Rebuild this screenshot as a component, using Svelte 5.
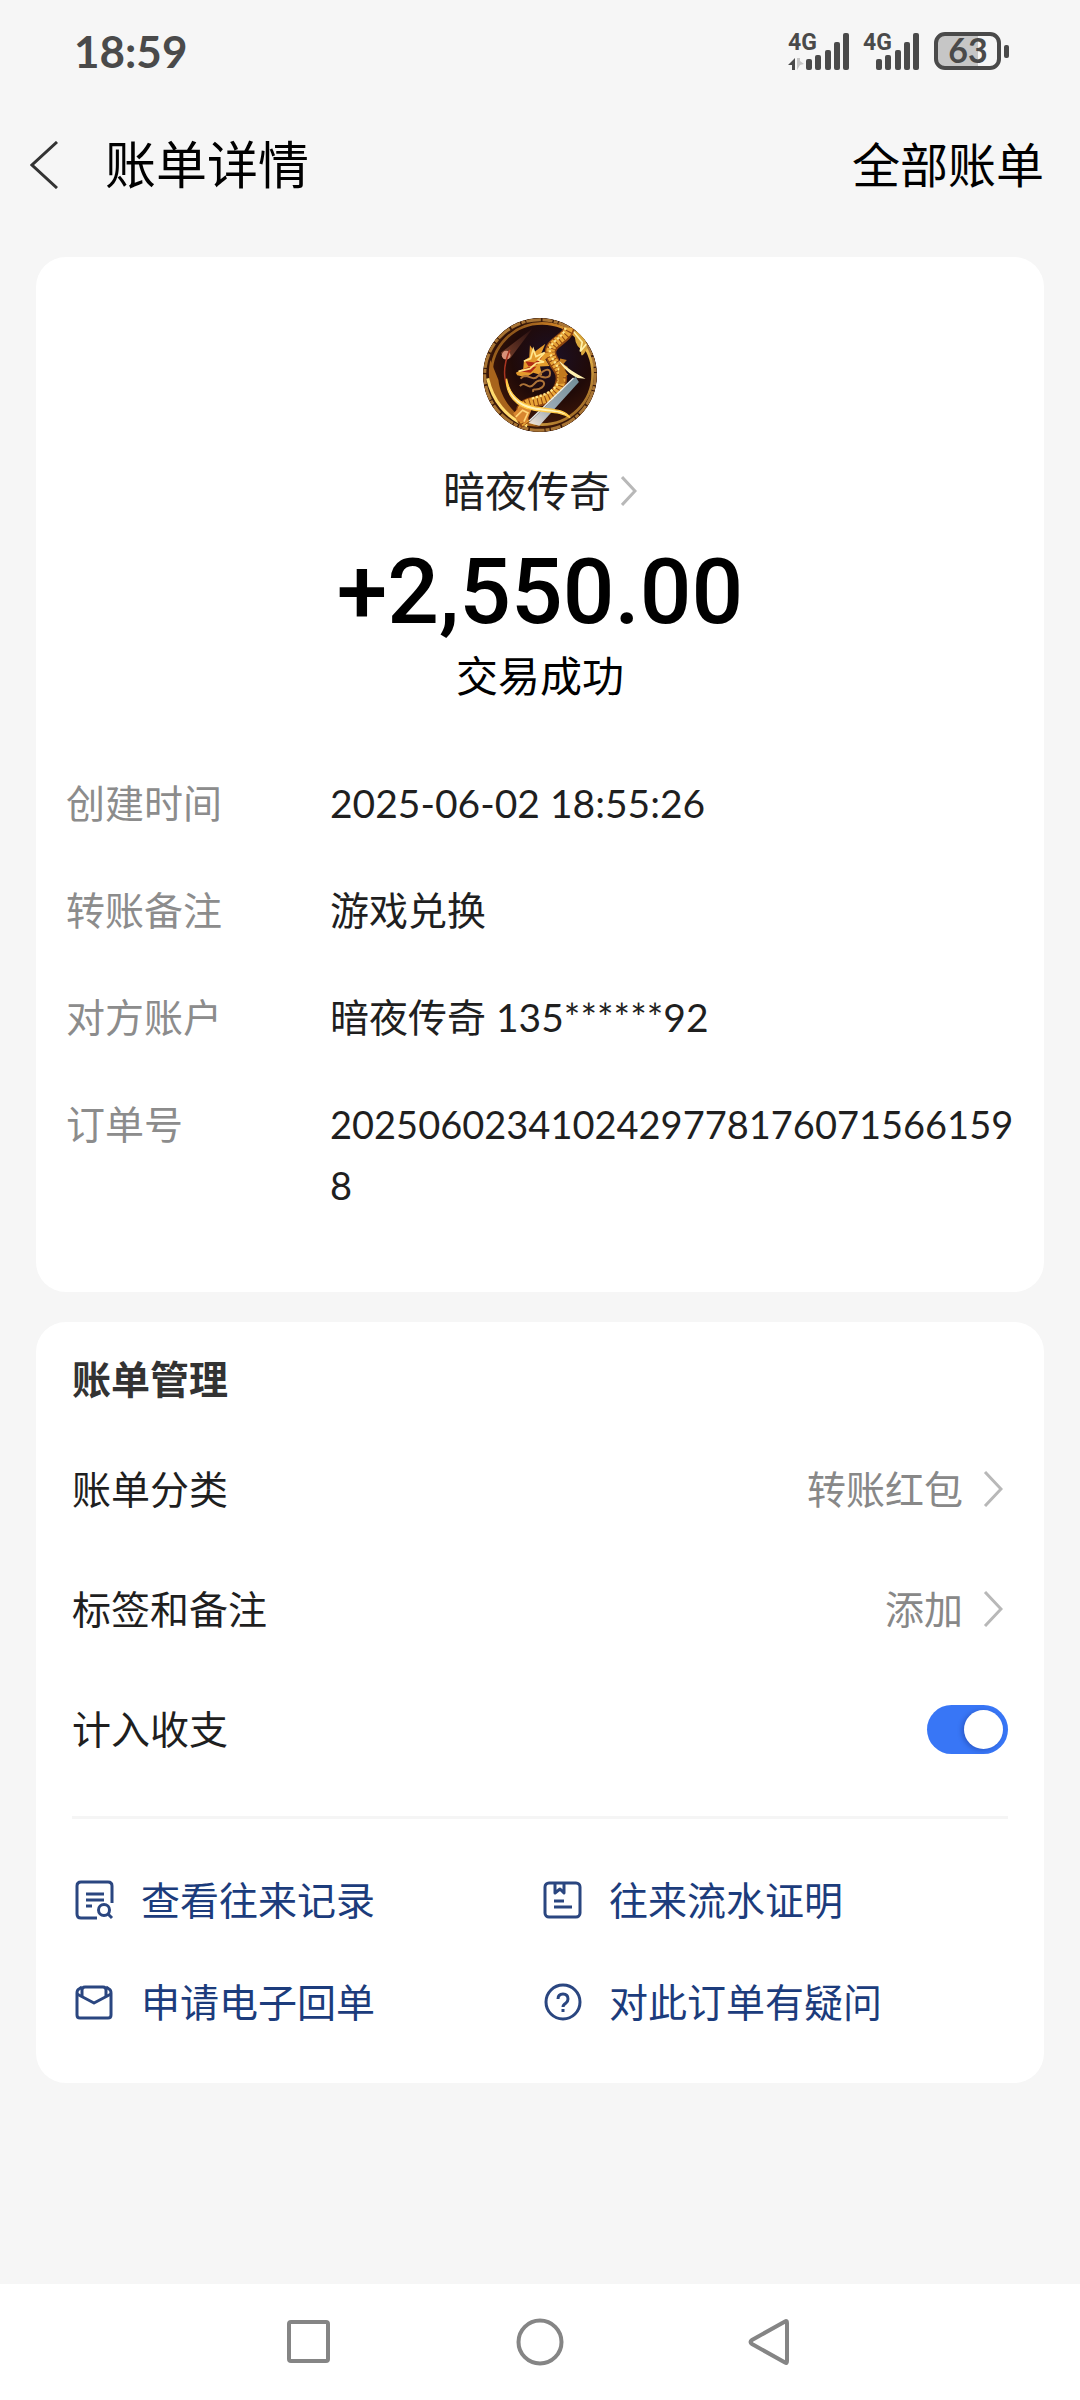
<script>
  const details = [
    { label: '创建时间', value: '2025-06-02 18:55:26' },
    { label: '转账备注', value: '游戏兑换' },
    { label: '对方账户', value: '暗夜传奇 135******92' },
    { label: '订单号', value: '20250602341024297781760715661598', long: true }
  ];
  const settings = [
    { label: '账单分类', value: '转账红包' },
    { label: '标签和备注', value: '添加' }
  ];
  const links = [
    { icon: 'records', label: '查看往来记录' },
    { icon: 'proof', label: '往来流水证明' },
    { icon: 'receipt', label: '申请电子回单' },
    { icon: 'help', label: '对此订单有疑问' }
  ];
  const bars = [
    { x: 0, h: 11 },
    { x: 9, h: 15 },
    { x: 19, h: 20 },
    { x: 28, h: 28 },
    { x: 37, h: 37 }
  ];
  let counted = $state(true);
</script>

<div class="screen">
  <div class="status">
    <span class="clock">18:59</span>
    <div class="indicators">
      <svg class="signal" width="61" height="50" viewBox="0 -6 61 50" aria-label="4G">
        <text x="0" y="18">4G</text>
        <path class="up" d="M7 26v12H4v-5H0z" />
        <path class="down" d="M9 26h3v3l4 3-4 1-3 5z" />
        {#each bars as bar}
          <rect x={18 + bar.x} y={38 - bar.h} width="6" height={bar.h} rx="2" />
        {/each}
      </svg>
      <svg class="signal" width="57" height="50" viewBox="0 -6 57 50" aria-label="4G">
        <text x="0" y="18">4G</text>
        {#each bars as bar}
          <rect x={13 + bar.x} y={38 - bar.h} width="6" height={bar.h} rx="2" />
        {/each}
      </svg>
      <svg class="battery" width="76" height="50" viewBox="0 -6 76 50" aria-label="63">
        <path class="level" d="M11 2h33v34H11q-9 0-9-9V11q0-9 9-9z" />
        <rect class="shell" x="2" y="2" width="63" height="34" rx="9" />
        <rect class="tip" x="70" y="13" width="5" height="13" rx="2" />
        <text x="34" y="31">63</text>
      </svg>
    </div>
  </div>

  <header class="topbar">
    <button class="back" aria-label="返回">
      <svg width="28" height="48" viewBox="0 0 28 48"><path d="M27 1 2 24l25 23" /></svg>
    </button>
    <h1>账单详情</h1>
    <a class="all" href="#all">全部账单</a>
  </header>

  <main>
    <section class="card summary">
      <svg class="avatar" viewBox="70 55 340 340" aria-hidden="true">
        <defs>
          <clipPath id="disc"><circle cx="240" cy="225" r="170" /></clipPath>
          <radialGradient id="night" cx=".6" cy=".35" r=".7">
            <stop offset="0" stop-color="#1b1026" />
            <stop offset=".5" stop-color="#200a08" />
            <stop offset="1" stop-color="#4a1c08" />
          </radialGradient>
          <linearGradient id="rim" x1="0" y1="0" x2="1" y2="1">
            <stop offset="0" stop-color="#5a3414" />
            <stop offset=".3" stop-color="#c47a22" />
            <stop offset=".6" stop-color="#f0c050" />
            <stop offset="1" stop-color="#7a4212" />
          </linearGradient>
          <linearGradient id="blade" x1="1" y1="0" x2="0" y2="1">
            <stop offset="0" stop-color="#6f8b96" />
            <stop offset=".6" stop-color="#9aa9b4" />
            <stop offset="1" stop-color="#f6e6d8" />
          </linearGradient>
          <linearGradient id="tail" x1="1" y1="0" x2="0" y2="1">
            <stop offset="0" stop-color="#2a1010" />
            <stop offset="1" stop-color="#a05a3c" />
          </linearGradient>
        </defs>
        <g clip-path="url(#disc)">
          <circle cx="240" cy="225" r="170" fill="url(#night)" />
          <circle cx="240" cy="225" r="164" fill="none" stroke="#3a1a0a" stroke-width="14" />
          <circle cx="240" cy="225" r="165" fill="none" stroke="#a87434" stroke-width="9" stroke-dasharray="30 4 12 3 44 5" />
          <circle cx="246" cy="222" r="151" fill="none" stroke="url(#rim)" stroke-width="8" />
          <path d="M92 180c-20 90 30 170 110 196l40 4c-70-20-120-80-126-140z" fill="#a8641c" />
          <path d="M84 235c14 65 55 118 118 142" fill="none" stroke="#ffdc70" stroke-width="9" />
          <path d="M124 158 218 86 152 174q-22 12-28-16z" fill="url(#tail)" opacity=".7" />
          <circle cx="139" cy="166" r="13" fill="#d89078" />
          <path d="M345 92q34 16 36 54-22 40-18 4-24-18-18-58z" fill="#d9a63c" />
          <path d="m340 95 26 32-6 28 18-22" fill="none" stroke="#fff0a8" stroke-width="5" />
          <path d="M326 86c-4 32-62 42-54 78s44 46 28 92-60 44-92 54-28 40-10 62" fill="none" stroke="#8e4510" stroke-width="34" />
          <path d="M326 84c-4 32-62 42-54 78s44 46 28 92-60 44-92 54-28 40-10 62" fill="none" stroke="#e8a436" stroke-width="25" stroke-dasharray="9 3" />
          <path d="M316 84c-4 30-54 42-46 74s42 50 26 86-52 42-82 52" fill="none" stroke="#ffe487" stroke-width="7" stroke-dasharray="7 5" />
          <path d="m300 176 20 4-10 12 14 10-12 8 12 14-16 8 6 18-20 2" fill="#c27a1e" />
          <path d="M168 218l22-12 2-24 16-10 2-36 14 20 32-24-12 28 34-4-22 22 12 20-28 2 6 26-26-8-22 14-26-6z" fill="#e39a2c" />
          <path d="m176 214 28-12 26-2-18 18zm20-30 28 4 24-20-16 26-26 6z" fill="#b02a14" />
          <path d="m192 184 20-8 8-28 8 22 26-12-20 22 18 6-24 4-18 16-34 8" fill="none" stroke="#ffe68c" stroke-width="5" />
          <path d="M182 236c20-22 34 12 52-8s36-26 36-8-26 14-34 4m-56 34c16-20 24 16 42-6s42-4 24 10-30-2-26 14" fill="none" stroke="#ad7338" stroke-width="6" />
          <path d="m346 230 10 16-118 130-32-8z" fill="url(#blade)" />
          <path d="m340 234-132 128" stroke="#eaf2f2" stroke-width="4" />
          <path d="m160 340 22-22 32 12-16 40-26-8z" fill="#d88630" />
          <path d="m168 350 20-20 16 8-12 26" fill="none" stroke="#ffd477" stroke-width="5" />
          <path d="M150 150c-26 60-18 110 16 144" fill="none" stroke="#a83420" stroke-width="5" />
          <path d="M140 236c8 44 36 72 76 82 50 12 92 4 114 34-30-20-66-14-108-22-54-10-84-46-82-94z" fill="#fff3b8" stroke="#ffc845" stroke-width="4" />
          <path d="M296 182c24 22 50 40 80 54l-24-2c-22-10-44-30-56-52z" fill="#fff0b0" />
        </g>
      </svg>
      <button class="payee">
        <span>暗夜传奇</span>
        <svg width="16" height="30" viewBox="0 0 16 30"><path d="m1 1 13 14L1 29" /></svg>
      </button>
      <div class="amount">+2,550.00</div>
      <div class="result">交易成功</div>
      <dl>
        {#each details as row}
          <div class="detail">
            <dt>{row.label}</dt>
            <dd class:long={row.long}>{row.value}</dd>
          </div>
        {/each}
      </dl>
    </section>

    <section class="card manage">
      <h2>账单管理</h2>
      {#each settings as row}
        <button class="setting">
          <span>{row.label}</span>
          <span class="value">{row.value}</span>
          <svg width="20" height="36" viewBox="0 0 20 36"><path d="m2 1 16 17L2 35" /></svg>
        </button>
      {/each}
      <div class="setting">
        <label for="counted">计入收支</label>
        <input id="counted" type="checkbox" role="switch" bind:checked={counted} />
      </div>
      <hr />
      <nav class="links">
        {#each links as link}
          <a href={'#' + link.icon}>
            <svg width="40" height="40" viewBox="0 0 40 40" aria-hidden="true">
              {#if link.icon === 'records'}
                <path d="M37 23V6q0-4-4-4H6Q2 2 2 6v28q0 4 4 4h16" />
                <path d="M11 14h18M11 20h18M11 26h6" />
                <circle cx="29" cy="30" r="5.500" />
                <path d="m33 34 4 4" />
              {:else if link.icon === 'proof'}
                <rect x="2" y="3" width="35" height="34" rx="4" />
                <path d="M12 3v10l5-4 4 4V3M11 21h10M11 27h18" />
              {:else if link.icon === 'receipt'}
                <path d="M7 5 4 7q-2 1-2 4v22q0 3 3 3h28q3 0 3-3V11q0-3-2-4l-3-2" />
                <path d="M7 14V8q0-3 3-3h18q3 0 3 3v6" />
                <path d="m2 12 17 9 17-9" />
              {:else}
                <circle cx="20" cy="20" r="17" />
                <path d="M15 17q0-5 5-5t5 5q0 2-2 4-3 2-3 4" />
                <path d="M20 27v3" />
              {/if}
            </svg>
            <span>{link.label}</span>
          </a>
        {/each}
      </nav>
    </section>
  </main>

  <footer class="sysnav">
    <button aria-label="最近任务">
      <svg width="48" height="48" viewBox="0 0 48 48"><rect x="4" y="4" width="39" height="39" rx="2" /></svg>
    </button>
    <button aria-label="主屏幕">
      <svg width="48" height="48" viewBox="0 0 48 48"><circle cx="24" cy="24" r="21.500" /></svg>
    </button>
    <button aria-label="返回上一页">
      <svg width="48" height="48" viewBox="0 0 48 48"><path d="M38 3.500Q40 2 40 5v38q0 3-2 1.500L5 26q-3-2 0-4z" /></svg>
    </button>
  </footer>
</div>

<style>
  :global(body) {
    margin: 0;
    background: #f6f6f6;
  }
  .screen {
    min-height: 100vh;
    display: flex;
    flex-direction: column;
    background: #f6f6f6;
    color: #1f1f1f;
    font-family: Lato, "Noto Sans CJK SC", sans-serif;
    font-size: 39px;
    line-height: 60px;
  }
  button {
    border: 0;
    padding: 0;
    background: none;
    color: inherit;
    font: inherit;
    text-align: left;
  }
  a {
    text-decoration: none;
  }
  svg {
    display: block;
    flex: none;
    fill: none;
  }
  .status {
    height: 102px;
    padding: 0 70px 0 74px;
    display: flex;
    align-items: center;
    justify-content: space-between;
    color: #4a4a4a;
  }
  .clock {
    font-size: 44px;
    font-weight: 700;
  }
  .indicators {
    display: flex;
    gap: 14px;
  }
  .signal,
  .battery {
    fill: #4a4a4a;
    overflow: visible;
  }
  .signal text {
    font-family: Roboto, sans-serif;
    font-size: 23px;
    font-weight: 700;
  }
  .signal .down,
  .battery .level {
    fill: #c6c6c6;
  }
  .battery .shell {
    fill: none;
    stroke: #4a4a4a;
    stroke-width: 4px;
  }
  .battery text {
    font-size: 34px;
    font-weight: 700;
    text-anchor: middle;
  }
  .topbar {
    height: 126px;
    padding: 0 36px 0 30px;
    display: flex;
    align-items: center;
    color: #000;
  }
  .back {
    width: 75px;
  }
  .back svg {
    stroke: #333;
    stroke-width: 3px;
  }
  h1 {
    margin: 0;
    flex: 1;
    font-size: 51px;
    font-weight: 400;
  }
  .all {
    color: #000;
    font-size: 48px;
  }
  main {
    padding: 29px 36px;
    display: flex;
    flex-direction: column;
    gap: 30px;
  }
  .card {
    border-radius: 30px;
    background: #fff;
  }
  .summary {
    padding: 61px 30px 76px;
    display: flex;
    flex-direction: column;
    align-items: center;
  }
  .avatar {
    width: 114px;
    height: 114px;
  }
  .payee {
    margin-top: 29px;
    display: flex;
    align-items: center;
    gap: 10px;
    font-size: 42px;
  }
  .payee svg,
  .setting svg {
    stroke: #b8b8b8;
    stroke-width: 3px;
  }
  .amount {
    margin-top: 26px;
    color: #000;
    font-family: Roboto, sans-serif;
    font-size: 91px;
    font-weight: 500;
    line-height: 90px;
  }
  .result {
    margin-top: 9px;
    color: #000;
    font-size: 42px;
  }
  dl {
    width: 100%;
    margin: 67px 0 0;
    display: flex;
    flex-direction: column;
    gap: 46px;
    line-height: 61px;
  }
  .detail {
    display: flex;
  }
  dt {
    width: 264px;
    flex: none;
    color: #8c8c8c;
  }
  dd {
    margin: 0;
    flex: 1;
    word-break: break-all;
  }
  .long {
    font-size: 38px;
  }
  .manage {
    padding: 27px 36px 30px;
  }
  h2 {
    margin: 0 0 20px;
    color: #333;
    font-size: 39px;
    font-weight: 700;
  }
  .setting {
    width: 100%;
    height: 120px;
    display: flex;
    align-items: center;
    justify-content: space-between;
  }
  .setting .value {
    margin-left: auto;
    color: #888;
  }
  .setting svg {
    margin: 0 5px 0 20px;
  }
  input {
    appearance: none;
    box-sizing: border-box;
    width: 81px;
    height: 49px;
    margin: 0;
    padding: 5px;
    display: flex;
    border-radius: 25px;
    background: #ccc;
  }
  input::before {
    content: "";
    width: 39px;
    height: 39px;
    border-radius: 50%;
    background: #fff;
    box-shadow: -2px 1px 5px rgba(0, 0, 60, 0.25);
  }
  input:checked {
    justify-content: flex-end;
    background: #3876f6;
  }
  hr {
    height: 3px;
    margin: 27px 0 30px;
    border: 0;
    background: #f5f5f5;
  }
  .links {
    display: grid;
    grid-template-columns: 1fr 1fr;
    grid-auto-rows: 102px;
  }
  .links a {
    padding-left: 3px;
    display: flex;
    align-items: center;
    gap: 26px;
    color: #1c3c7c;
  }
  .links svg {
    stroke: #2a4680;
    stroke-width: 3px;
    stroke-linejoin: round;
  }
  .sysnav {
    height: 116px;
    margin-top: auto;
    display: flex;
    align-items: center;
    justify-content: center;
    gap: 183px;
    background: #fff;
  }
  .sysnav svg {
    stroke: #858585;
    stroke-width: 4px;
  }
</style>
